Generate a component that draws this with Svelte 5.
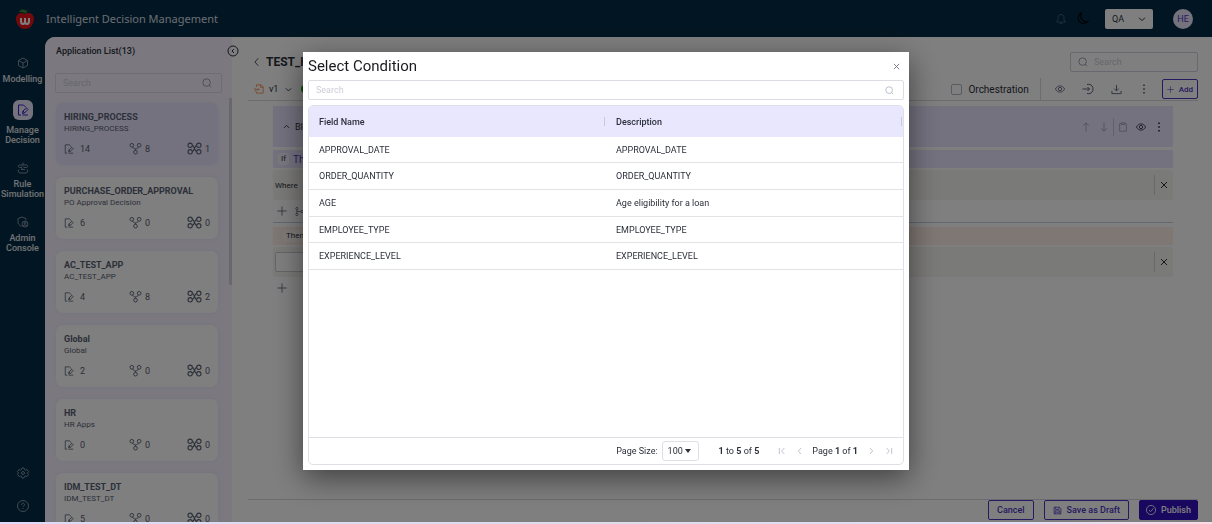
<script lang="ts">
	const navItems = [
		{ icon: 'cube', label: 'Modelling', active: false },
		{ icon: 'edit', label: 'Manage Decision', active: true },
		{ icon: 'rule', label: 'Rule Simulation', active: false },
		{ icon: 'admin', label: 'Admin Console', active: false }
	]

	const apps = [
		{ name: 'HIRING_PROCESS', desc: 'HIRING_PROCESS', rules: 14, trees: 8, flows: 1 },
		{ name: 'PURCHASE_ORDER_APPROVAL', desc: 'PO Approval Decision', rules: 6, trees: 0, flows: 0 },
		{ name: 'AC_TEST_APP', desc: 'AC_TEST_APP', rules: 4, trees: 8, flows: 2 },
		{ name: 'Global', desc: 'Global', rules: 2, trees: 0, flows: 0 },
		{ name: 'HR', desc: 'HR Apps', rules: 0, trees: 0, flows: 0 },
		{ name: 'IDM_TEST_DT', desc: 'IDM_TEST_DT', rules: 5, trees: 0, flows: 0 }
	]

	const fields = [
		{ name: 'APPROVAL_DATE', desc: 'APPROVAL_DATE' },
		{ name: 'ORDER_QUANTITY', desc: 'ORDER_QUANTITY' },
		{ name: 'AGE', desc: 'Age eligibility for a loan' },
		{ name: 'EMPLOYEE_TYPE', desc: 'EMPLOYEE_TYPE' },
		{ name: 'EXPERIENCE_LEVEL', desc: 'EXPERIENCE_LEVEL' }
	]

	let selected = $state('HIRING_PROCESS')
	let open = $state(true)
	let query = $state('')

	let rows = $derived(fields.filter((f) => f.name.toLowerCase().includes(query.toLowerCase())))
</script>

{#snippet icon(name: string, size: number)}
	<svg class="icon" width={size} height={size} viewBox="0 0 24 24" aria-hidden="true">
		{#if name === 'cube'}
			<path d="M12 2l9 5v10l-9 5-9-5V7zM3 7l9 5 9-5M12 12v10" />
		{:else if name === 'edit'}
			<path d="M18 7l-5-5H3v20h5M11 22h11M11 19l1-5 7-6 3 3-7 7zM12 14l3 4" />
		{:else if name === 'rule'}
			<path d="M12 1v5M5 6h14c3 0 3 5 0 5M5 6c-3 0-3 5 0 5h4M13 11h6M4 15l-2 3 3 4h14l3-4-2-3M8 15h8M11 9l-3 2 3 3" />
		{:else if name === 'admin'}
			<path d="M9 21c-5-3-7-5-7-10V5l8-3 8 3v3" />
			<circle cx="16" cy="16" r="6" />
			<circle cx="16" cy="14" r="2" />
			<path d="M12 20c1-3 7-3 8 0" />
		{:else if name === 'gear'}
			<path d="M9 5l1-3h4l1 3 2 1 3-1 3 4-2 3 2 3-3 4-3-1-2 1-1 3h-4l-1-3-2-1-3 1-3-4 2-3-2-3 3-4 3 1z" />
			<circle cx="12" cy="12" r="3" />
		{:else if name === 'help'}
			<circle cx="12" cy="12" r="11" />
			<path d="M9 10c0-5 6-5 6 0 0 2-3 2-3 4M12 16v2" />
		{:else if name === 'search'}
			<circle cx="11" cy="11" r="9" />
			<path d="M17 17l5 5" />
		{:else if name === 'tree'}
			<circle cx="4" cy="5" r="4" />
			<circle cx="20" cy="5" r="4" />
			<circle cx="12" cy="20" r="4" />
			<path d="M6 9c1 3 3 3 6 4 3-1 5-1 6-4M12 13v3" />
		{:else if name === 'flow'}
			<circle cx="4" cy="6" r="4" />
			<circle cx="20" cy="6" r="4" />
			<circle cx="4" cy="18" r="4" />
			<circle cx="20" cy="18" r="4" />
			<path d="M8 6c4 1 4 11 8 12M8 18c4-1 4-11 8-12" />
		{:else if name === 'branch'}
			<circle cx="5" cy="4" r="3" />
			<circle cx="5" cy="20" r="3" />
			<circle cx="19" cy="12" r="3" />
			<path d="M5 7v10M5 12h11" />
		{:else if name === 'bell'}
			<path d="M3 18h18l-3-4V9C18 1 6 1 6 9v5zM9 21h6" />
		{:else if name === 'moon'}
			<path d="M10 2A10 10 0 1 0 22 17C13 20 6 11 10 2z" />
		{:else if name === 'left'}
			<path d="M15 3l-8 9 8 9" />
		{:else if name === 'right'}
			<path d="M9 3l8 9-8 9" />
		{:else if name === 'down'}
			<path class="thick" d="M3 8l9 9 9-9" />
		{:else if name === 'up'}
			<path class="thick" d="M3 17l9-9 9 9" />
		{:else if name === 'first'}
			<path d="M4 3v18M19 3l-8 9 8 9" />
		{:else if name === 'last'}
			<path d="M20 3v18M5 3l8 9-8 9" />
		{:else if name === 'collapse'}
			<circle cx="12" cy="12" r="10" />
			<path d="M14 8l-4 4 4 4" />
		{:else if name === 'close'}
			<path class="thick" d="M3 3l18 18M21 3L3 21" />
		{:else if name === 'plus'}
			<path d="M12 1v22M1 12h22" />
		{:else if name === 'eye'}
			<path d="M1 12c5-10 17-10 22 0-5 10-17 10-22 0z" />
			<circle cx="12" cy="12" r="4" />
		{:else if name === 'import'}
			<path d="M1 12h14M11 8l4 4-4 4M10 3c16-4 16 22 0 18" />
		{:else if name === 'download'}
			<path d="M12 2v13M7 10l5 5 5-5M2 15v6h20v-6" />
		{:else if name === 'dots'}
			<path class="dots" d="M12 1v4M12 10v4M12 19v4" />
		{:else if name === 'arrow-up'}
			<path d="M12 23V2M5 9l7-7 7 7" />
		{:else if name === 'arrow-down'}
			<path d="M12 1v21M5 15l7 7 7-7" />
		{:else if name === 'clip'}
			<path d="M8 4H4v18h16V4h-4M8 2h8v4H8z" />
		{:else if name === 'version'}
			<path d="M6 7V2h11l5 5v15H6v-3M16 2v6h6M2 9v4h10M9 10l3 3-3 3M2 17h4" />
		{:else if name === 'save'}
			<path d="M3 3h14l4 4v14H3zM7 3v6h9V3M6 21v-8h12v8M9 17h6" />
		{:else if name === 'check'}
			<circle cx="12" cy="12" r="11" />
			<path d="M7 12l4 4 7-8" />
		{/if}
	</svg>
{/snippet}

<div class="app">
	<header class="topbar">
		<svg class="logo" width="18" height="20" viewBox="0 0 18 20" aria-hidden="true">
			<path fill="#e3131b" d="M9 5c3-2 9-1 9 5 0 5-4 10-9 10S0 15 0 10C0 4 6 3 9 5z" />
			<path fill="#3f8a3a" d="M3 3c2-3 5-3 7-1l2-2-2 5C8 3 6 3 3 3z" />
			<path fill="none" stroke="#fff" stroke-width="2" d="M5 9v3c0 4 4 4 4 0V9v3c0 4 4 4 4 0V9" />
		</svg>
		<span class="brand">Intelligent Decision Management</span>
		<button class="plain bell" aria-label="Notifications">{@render icon('bell', 12)}</button>
		<button class="plain moon" aria-label="Dark mode">{@render icon('moon', 13)}</button>
		<div class="env">
			<select aria-label="Environment"><option>QA</option></select>
			{@render icon('down', 8)}
		</div>
		<button class="avatar">HE</button>
	</header>

	<div class="body">
		<nav class="rail">
			{#each navItems as item (item.label)}
				<a href="#top" class="nav-item" class:active={item.active}>
					<span class="nav-icon">{@render icon(item.icon, 12)}</span>
					<span>{item.label}</span>
				</a>
			{/each}
			<div class="rail-end">
				<button class="plain" aria-label="Settings">{@render icon('gear', 12)}</button>
				<button class="plain" aria-label="Help">{@render icon('help', 12)}</button>
			</div>
		</nav>

		<div class="workspace">
			<aside class="list-pane">
				<div class="list-head">
					<h2>Application List(13)</h2>
					<button class="plain" aria-label="Collapse">{@render icon('collapse', 12)}</button>
				</div>
				<div class="list-search field">
					<input type="text" placeholder="Search" aria-label="Search applications" />
					{@render icon('search', 10)}
				</div>
				<div class="list-body">
					<div class="cards">
						{#each apps as app (app.name)}
							<button class="card" class:selected={selected === app.name} onclick={() => (selected = app.name)}>
								<strong>{app.name}</strong>
								<span class="desc">{app.desc}</span>
								<span class="counts">
									<span>{@render icon('edit', 10)}<span class="num">{app.rules}</span></span>
									<span>{@render icon('tree', 11)}{app.trees}</span>
									<span>{@render icon('flow', 13)}{app.flows}</span>
								</span>
							</button>
						{/each}
					</div>
					<div class="track"><div class="thumb"></div></div>
				</div>
			</aside>

			<main>
				<div class="title-row">
					<button class="plain" aria-label="Back">{@render icon('left', 10)}</button>
					<h1>TEST_HIRING</h1>
					<div class="field title-search">
						{@render icon('search', 10)}
						<input type="text" placeholder="Search" aria-label="Search rule" />
					</div>
				</div>
				<div class="toolbar">
					<span class="version">{@render icon('version', 10)}</span>
					<span>v1</span>
					{@render icon('down', 7)}
					<span class="status"></span>
					<label class="orch"><input type="checkbox" />Orchestration</label>
					<div class="tools">
						<button class="plain" aria-label="View">{@render icon('eye', 10)}</button>
						<button class="plain" aria-label="Import">{@render icon('import', 12)}</button>
						<button class="plain" aria-label="Download">{@render icon('download', 11)}</button>
						<button class="plain" aria-label="More">{@render icon('dots', 10)}</button>
					</div>
					<button class="outline add">{@render icon('plus', 7)}Add</button>
				</div>

				<section class="block">
					<div class="block-head">
						{@render icon('up', 7)}
						<span>Block</span>
						<div class="block-tools">
							<button class="plain faint" aria-label="Move up">{@render icon('arrow-up', 10)}</button>
							<button class="plain faint split" aria-label="Move down">{@render icon('arrow-down', 10)}</button>
							<button class="plain faint" aria-label="Delete">{@render icon('clip', 10)}</button>
							<button class="plain" aria-label="View">{@render icon('eye', 10)}</button>
							<button class="plain" aria-label="More">{@render icon('dots', 10)}</button>
						</div>
					</div>
					<div class="strip if"><span class="tag">If</span><a href="#top">The</a></div>
					<div class="clause">
						<span>Where</span>
						<button class="plain remove" aria-label="Remove condition">{@render icon('close', 8)}</button>
					</div>
					<div class="adders">
						<button class="plain" aria-label="Add condition">{@render icon('plus', 10)}</button>
						<button class="plain" aria-label="Add group">{@render icon('branch', 9)}</button>
					</div>
					<div class="strip then"><span class="tag">Then</span></div>
					<div class="clause">
						<input class="value" type="text" aria-label="Action" />
						<button class="plain remove" aria-label="Remove action">{@render icon('close', 8)}</button>
					</div>
					<div class="adders last">
						<button class="plain" aria-label="Add action">{@render icon('plus', 10)}</button>
					</div>
				</section>

				<footer>
					<button class="outline">Cancel</button>
					<button class="outline">{@render icon('save', 9)}Save as Draft</button>
					<button class="outline primary">{@render icon('check', 10)}Publish</button>
				</footer>
			</main>
		</div>
	</div>
</div>

{#if open}
	<div class="backdrop">
		<div class="modal" role="dialog" aria-modal="true" aria-labelledby="modal-title">
			<div class="modal-head">
				<h2 id="modal-title">Select Condition</h2>
				<button class="plain" aria-label="Close" onclick={() => (open = false)}>{@render icon('close', 7)}</button>
			</div>
			<div class="field">
				<input type="text" placeholder="Search" aria-label="Search fields" bind:value={query} />
				{@render icon('search', 9)}
			</div>
			<div class="grid">
				<div class="grid-body">
					<table>
						<thead>
							<tr><th>Field Name</th><th>Description</th></tr>
						</thead>
						<tbody>
							{#each rows as row (row.name)}
								<tr><td>{row.name}</td><td>{row.desc}</td></tr>
							{/each}
						</tbody>
					</table>
				</div>
				<div class="pager">
					<label for="page-size">Page Size:</label>
					<div class="page-size">
						<select id="page-size"><option>100</option></select>
						<span class="caret"></span>
					</div>
					<span class="range"><b>1</b> to <b>5</b> of <b>5</b></span>
					<button class="plain" aria-label="First page" disabled>{@render icon('first', 8)}</button>
					<button class="plain" aria-label="Previous page" disabled>{@render icon('left', 8)}</button>
					<span>Page <b>1</b> of <b>1</b></span>
					<button class="plain" aria-label="Next page" disabled>{@render icon('right', 8)}</button>
					<button class="plain" aria-label="Last page" disabled>{@render icon('last', 8)}</button>
				</div>
			</div>
		</div>
	</div>
{/if}

<style>
	:global(body) {
		background: linear-gradient(90deg, #dedaf8, #dfdcec 50%, #e2def6 85%, #fbdbe6);
	}

	.app,
	.backdrop {
		font-family: Roboto, sans-serif;
		font-size: 9px;
		color: #2b2f3a;
	}

	.app {
		display: flex;
		flex-direction: column;
		height: calc(100vh - 2px);
		overflow: hidden;
		background: #052b44;
	}

	button,
	input,
	select {
		font: inherit;
		color: inherit;
		box-sizing: border-box;
	}

	h1,
	h2 {
		margin: 0;
	}

	.icon {
		display: block;
		flex: none;
		fill: none;
		stroke: currentColor;
		stroke-width: 2;
		overflow: visible;
	}

	.thick {
		stroke-width: 3;
	}

	.dots {
		stroke-width: 4;
	}

	.plain {
		display: flex;
		padding: 0;
		border: 0;
		background: none;
		cursor: pointer;
	}

	.topbar {
		display: flex;
		align-items: center;
		flex: none;
		height: 37px;
		padding: 0 19px 0 16px;
		color: #fff;
	}

	.brand {
		margin: 0 auto 0 12px;
		color: #d4dbe2;
		font: 11px 'Noto Sans', sans-serif;
	}

	.bell {
		color: #3f5a75;
	}

	.moon {
		margin: 0 16px 0 9px;
		color: #000;
	}

	.env {
		display: flex;
		align-items: center;
		width: 48px;
		height: 20px;
		padding-right: 7px;
		box-sizing: border-box;
		background: #fff;
		border-radius: 2px;
		color: #2b2f3a;
	}

	.env select,
	.page-size select {
		flex: 1;
		min-width: 0;
		padding: 0 0 0 7px;
		border: 0;
		background: none;
		appearance: none;
	}

	.avatar {
		width: 20px;
		height: 20px;
		margin-left: 20px;
		padding: 0;
		border: 0;
		border-radius: 50%;
		background: #e8e5fb;
		color: #4a35c0;
	}

	.body {
		display: flex;
		flex: 1;
		min-height: 0;
	}

	.rail {
		display: flex;
		flex-direction: column;
		align-items: center;
		gap: 13px;
		width: 45px;
		flex: none;
		padding: 16px 0 10px;
		box-sizing: border-box;
		color: #fff;
	}

	.nav-item {
		display: flex;
		flex-direction: column;
		align-items: center;
		gap: 1px;
		width: 45px;
		color: #e0e4e8;
		font-weight: 500;
		line-height: 10px;
		text-align: center;
		text-decoration: none;
	}

	.nav-item.active {
		gap: 5px;
		margin-top: 3px;
	}

	.nav-icon {
		display: grid;
		place-items: center;
		width: 20px;
		height: 20px;
		border-radius: 6px;
		color: #8093a5;
	}

	.active .nav-icon {
		background: #e8e5fb;
		color: #3a1fc0;
	}

	.rail-end {
		display: flex;
		flex-direction: column;
		gap: 21px;
		margin-top: auto;
		color: #8093a5;
	}

	.workspace {
		display: flex;
		flex: 1;
		min-width: 0;
		overflow: hidden;
		background: #fff;
		border-top-left-radius: 10px;
	}

	.list-pane {
		display: flex;
		flex-direction: column;
		width: 187px;
		flex: none;
		background: #f6f3ff;
	}

	.list-head {
		display: flex;
		align-items: center;
		justify-content: space-between;
		height: 28px;
		margin-right: -7px;
		padding: 0 0 0 11px;
	}

	.list-head h2 {
		font-size: 9px;
		font-weight: 500;
	}

	.field {
		display: flex;
		align-items: center;
		height: 20px;
		padding: 0 9px 0 7px;
		box-sizing: border-box;
		border: 1px solid #dcdce4;
		border-radius: 2px;
		color: #8a90a0;
	}

	.field input {
		flex: 1;
		min-width: 0;
		padding: 0;
		border: 0;
		outline: 0;
		background: none;
		color: #2b2f3a;
	}

	.field input::placeholder {
		color: #cdced6;
	}

	.list-search {
		margin: 8px 10px 5px;
	}

	.list-body {
		display: flex;
		justify-content: space-between;
		flex: 1;
		min-height: 0;
	}

	.cards {
		display: flex;
		flex-direction: column;
		gap: 12px;
		width: 162px;
		padding: 5px 0 0 11px;
	}

	.card {
		display: flex;
		flex-direction: column;
		align-items: flex-start;
		flex: none;
		height: 62px;
		padding: 8px 8px 10px;
		border: 0;
		border-radius: 7px;
		background: #fff;
		box-shadow: 0 0 4px rgba(110, 90, 220, 0.12);
		color: #586072;
		line-height: 12px;
		text-align: left;
		cursor: pointer;
	}

	.card.selected {
		background: #e9e5ff;
	}

	.desc {
		font-size: 8px;
	}

	.counts {
		display: flex;
		justify-content: space-between;
		align-self: stretch;
		margin-top: auto;
	}

	.counts > span {
		display: flex;
		align-items: center;
		gap: 4px;
	}

	.num {
		width: 12px;
		padding-left: 2px;
	}

	.track {
		width: 3px;
	}

	.thumb {
		height: 44%;
		background: #d0cfdc;
	}

	main {
		display: flex;
		flex-direction: column;
		flex: 1;
		min-width: 0;
		padding: 15px 14px 0 16px;
	}

	.title-row {
		display: flex;
		align-items: center;
		gap: 4px;
		padding-left: 4px;
	}

	h1 {
		font-size: 12px;
		font-weight: 700;
	}

	.title-search {
		gap: 6px;
		width: 128px;
		margin-left: auto;
		border-color: #d0d2de;
	}

	.toolbar {
		display: flex;
		align-items: center;
		height: 22px;
		padding: 6px 0 0 6px;
		border-bottom: 1px solid #d8d9de;
	}

	.version {
		margin-right: 5px;
		color: #f08a4b;
	}

	.toolbar > .icon {
		margin: 0 9px 0 7px;
	}

	.status {
		width: 8px;
		height: 8px;
		border-radius: 50%;
		background: #0aa50a;
	}

	.orch {
		display: flex;
		align-items: center;
		gap: 6px;
		height: 22px;
		margin-left: auto;
		padding-right: 11px;
		border-right: 1px solid #d8d9de;
		font-size: 10px;
	}

	.orch input {
		width: 11px;
		height: 11px;
		margin: 0;
		appearance: none;
		border: 1px solid #b4b6c0;
		border-radius: 2px;
	}

	.tools {
		display: flex;
		align-items: center;
		gap: 17px;
		padding: 0 13px 0 14px;
		color: #5a6076;
	}

	.outline {
		display: flex;
		align-items: center;
		justify-content: center;
		gap: 5px;
		height: 20px;
		padding: 0 8px;
		border: 1px solid #4a35c0;
		border-radius: 2px;
		background: none;
		color: #4a35c0;
		font-weight: 500;
		cursor: pointer;
	}

	.outline.add {
		padding: 0 4px;
		font-size: 8px;
	}

	.block {
		display: flex;
		flex-direction: column;
		flex: 1;
		padding: 5px 25px 0;
	}

	.block-head {
		display: flex;
		align-items: center;
		gap: 5px;
		height: 41px;
		margin-bottom: 3px;
		padding: 0 9px 0 10px;
		background: #e9e5ff;
	}

	.block-tools {
		display: flex;
		align-items: center;
		gap: 8px;
		margin-left: auto;
	}

	.faint {
		color: #9a9bb0;
	}

	.split {
		padding: 4px 4px 4px 0;
		margin-right: -4px;
		border-right: 1px solid #c4c2d6;
	}

	.strip {
		display: flex;
		align-items: center;
		gap: 4px;
		height: 18px;
		margin-bottom: 2px;
		padding-left: 5px;
	}

	.strip a {
		color: #4a35c0;
		font-size: 10px;
		text-decoration: none;
	}

	.if {
		background: #e9e5ff;
	}

	.then {
		padding-left: 10px;
		background: #ffeee6;
	}

	.tag {
		padding: 0 3px;
		border-radius: 2px;
		background: rgba(255, 255, 255, 0.5);
		font-size: 8px;
		line-height: 12px;
	}

	.clause {
		display: flex;
		align-items: center;
		height: 30px;
		padding: 0 5px 0 2px;
		border-radius: 3px;
		background: #f5f4f0;
		font-size: 8px;
	}

	.value {
		width: 120px;
		height: 20px;
		border: 1px solid #c8c9d2;
		border-radius: 2px;
		background: #fff;
	}

	.remove {
		margin-left: auto;
		padding: 6px 0 6px 5px;
		border-left: 1px solid #d0d1d8;
	}

	.adders {
		display: flex;
		align-items: center;
		gap: 8px;
		height: 22px;
		margin-bottom: 4px;
		padding-left: 4px;
		border-bottom: 1px solid #c5d0dc;
		color: #5a6076;
	}

	.adders.last {
		border: 0;
	}

	footer {
		display: flex;
		justify-content: flex-end;
		gap: 10px;
		border-top: 1px solid #d8d9de;
		padding-bottom: 2px;
	}

	.primary {
		padding: 0 6px;
		background: #3311be;
		border-color: #3311be;
		color: #fff;
	}

	.backdrop {
		position: fixed;
		inset: 0 0 2px;
		display: flex;
		align-items: center;
		justify-content: center;
		background: rgba(0, 0, 0, 0.5);
	}

	.modal {
		display: flex;
		flex-direction: column;
		width: 50%;
		height: 80%;
		padding: 0 5px 5px;
		box-sizing: border-box;
		background: #fff;
		box-shadow: 0 8px 28px rgba(0, 0, 0, 0.5);
	}

	.modal-head {
		display: flex;
		align-items: center;
		justify-content: space-between;
		height: 28px;
		padding-right: 4px;
		color: #6a7080;
	}

	.modal-head h2 {
		color: #1a1a1f;
		font-size: 15px;
		font-weight: 400;
	}

	.modal .field {
		color: #a5adbd;
	}

	.grid {
		display: flex;
		flex-direction: column;
		flex: 1;
		margin-top: 5px;
		overflow: hidden;
		border: 1px solid #dfdfe6;
		border-radius: 5px;
	}

	.grid-body {
		flex: 1;
	}

	table {
		width: 100%;
		height: 164px;
		border-collapse: collapse;
		table-layout: fixed;
	}

	th {
		height: 31px;
		padding: 0 10px;
		background: linear-gradient(#c9c7da, #c9c7da) no-repeat right 1px center / 1px 9px #e9e7fe;
		font-weight: 500;
		text-align: left;
	}

	td {
		padding: 0 10px;
		border-bottom: 1px solid #e2e2e7;
	}

	.pager {
		display: flex;
		align-items: center;
		justify-content: flex-end;
		height: 26px;
		padding-right: 10px;
		border-top: 1px solid #dfdfe6;
	}

	.page-size {
		display: flex;
		align-items: center;
		width: 37px;
		height: 20px;
		margin-left: 4px;
		padding-right: 7px;
		box-sizing: border-box;
		border: 1px solid #dfdfe6;
		border-radius: 3px;
	}

	.page-size select {
		padding-left: 5px;
	}

	.caret {
		border: 3px solid transparent;
		border-top: 4px solid #2b2f3a;
		border-bottom: 0;
	}

	.range {
		margin: 0 10px 0 20px;
	}

	.pager .plain {
		margin-left: 10px;
		color: #a4a6b2;
	}

	.pager .plain + span {
		margin-left: 8px;
	}

	.pager span + .plain {
		margin-left: 9px;
	}

	b {
		font-weight: 700;
	}
</style>
